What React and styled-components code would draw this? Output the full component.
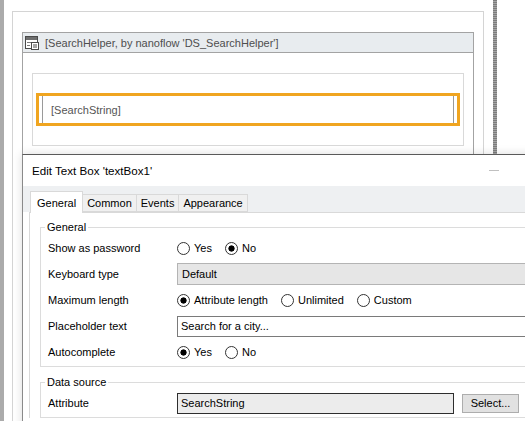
import styled, { createGlobalStyle } from "styled-components";

const GlobalStyle = createGlobalStyle`
  html, body {
    margin: 0;
    background: #ffffff;
  }
  body {
    font-family: "Liberation Sans", Arial, sans-serif;
    font-size: 11px;
    color: #000;
  }
`;

const Page = styled.div`
  position: relative;
  width: 525px;
  height: 421px;
  overflow: hidden;
  display: flex;
  background: #fff;
`;

const SideBar = styled.div`
  width: 4px;
  flex-shrink: 0;
  background: ${(p) => (p.$dark ? "#8e8e8e" : "#ababab")};
  background-image: ${(p) =>
    p.$dark
      ? "repeating-linear-gradient(0deg, #7c7c7c 0 1px, #a4a4a4 1px 2px)"
      : "none"};
`;

const Canvas = styled.div`
  width: 489px;
  flex-shrink: 0;
  padding: 11px 0 0 8px;
  box-sizing: border-box;
`;

const OuterBox = styled.div`
  width: 472px;
  height: 420px;
  box-sizing: border-box;
  border: 1px solid #d4d4d4;
  padding: 20px 9px;
`;

const DataView = styled.div`
  width: 452px;
  box-sizing: border-box;
`;

const DataHeader = styled.div`
  height: 21px;
  box-sizing: border-box;
  border: 1px solid #a3a3a3;
  background: #e8ecef;
  display: flex;
  align-items: center;
  gap: 6px;
  padding-left: 2px;
  color: #4e4e4e;
`;

const DataBody = styled.div`
  border-left: 1px solid #a3a3a3;
  border-right: 1px solid #a3a3a3;
  padding: 20px 9px;
  height: 200px;
`;

const InnerBox = styled.div`
  width: 432px;
  height: 73px;
  box-sizing: border-box;
  border: 1px solid #d9d9d9;
  padding: 19px 3px 0;
`;

const Selection = styled.div`
  height: 33px;
  box-sizing: border-box;
  border: 3px solid #f0a520;
  padding: 0 3px;
`;

const FakeInput = styled.div`
  height: 100%;
  box-sizing: border-box;
  border-left: 1px solid #9a9a9a;
  border-right: 1px solid #9a9a9a;
  padding-left: 8px;
  display: flex;
  align-items: center;
  color: #555;
`;

const Dialog = styled.div`
  position: absolute;
  left: 22px;
  top: 154px;
  width: 586px;
  height: 300px;
  background: #fff;
  border-top: 1px solid #5a5a5a;
  border-left: 1px solid #8a8a8a;
  box-shadow: 0 0 9px rgba(0, 0, 0, 0.14);
`;

const TitleBar = styled.div`
  height: 31px;
  display: flex;
  align-items: center;
`;

const Title = styled.div`
  flex: 1;
  padding-left: 9px;
  font-size: 11.6px;
`;

const WinButton = styled.div`
  width: 46px;
  height: 31px;
  display: flex;
  align-items: center;
  justify-content: center;
  &::before {
    content: "";
    width: 10px;
    height: 1px;
    background: ${(p) => (p.$muted ? "#c0c0c0" : "transparent")};
  }
`;

const TabStrip = styled.div`
  height: 26px;
  background: #eef0f2;
  display: flex;
  align-items: flex-end;
  padding-left: 7px;
`;

const Tab = styled.div`
  height: ${(p) => (p.$active ? "22px" : "18px")};
  box-sizing: border-box;
  padding: 0 ${(p) => (p.$active ? "6px" : "4px")};
  margin-bottom: ${(p) => (p.$active ? "-1px" : "0")};
  background: ${(p) => (p.$active ? "#fff" : "#f0f0f0")};
  border: 1px solid #d9d9d9;
  border-bottom: ${(p) => (p.$active ? "none" : "1px solid #d9d9d9")};
  margin-left: ${(p) => (p.$first ? "0" : "-1px")};
  display: flex;
  align-items: center;
  position: relative;
  z-index: ${(p) => (p.$active ? 1 : 0)};
`;

const Panel = styled.div`
  margin-left: 6px;
  border-top: 1px solid #d9d9d9;
  border-left: 1px solid #d9d9d9;
  padding: 6px 14px 0 10px;
`;

const Group = styled.fieldset`
  margin: ${(p) => (p.$spaced ? "7px" : "0")} 0 0;
  padding: 0 8px 1px 7px;
  border: 1px solid #dcdcdc;
  min-width: 0;
`;

const Legend = styled.legend`
  padding: 0 2px;
  margin-left: -3px;
  line-height: 16px;
`;

const Row = styled.div`
  height: 26px;
  display: grid;
  grid-template-columns: 129px 1fr;
  align-items: center;
`;

const Label = styled.div``;

const Radios = styled.div`
  display: flex;
  align-items: center;
  gap: 13px;
`;

const Radio = styled.div`
  display: flex;
  align-items: center;
  gap: 4px;
  &::before {
    content: "";
    width: 11px;
    height: 11px;
    border-radius: 50%;
    border: 1px solid #333;
    background: ${(p) =>
      p.$checked
        ? "radial-gradient(circle, #000 0 2.8px, #fff 3.4px)"
        : "#fff"};
  }
`;

const Field = styled.div`
  height: ${(p) => p.$h || 21}px;
  width: ${(p) => (p.$w ? `${p.$w}px` : "auto")};
  box-sizing: border-box;
  border: 1px solid ${(p) => p.$border || "#7a7a7a"};
  background: ${(p) => p.$bg || "#fff"};
  display: flex;
  align-items: center;
  padding-left: ${(p) => p.$pad || 3}px;
`;

const AttrLine = styled.div`
  display: flex;
  align-items: center;
  gap: 8px;
`;

const Button = styled.div`
  width: 57px;
  height: 19px;
  box-sizing: border-box;
  border: 1px solid #adadad;
  background: #e1e1e1;
  display: flex;
  align-items: center;
  justify-content: center;
`;

const FormIcon = () => (
  <svg width="14" height="14" viewBox="0 0 14 14">
    <rect x="0.5" y="0.5" width="12" height="12" fill="#fff" stroke="#4a4a4a" />
    <rect x="1" y="1" width="11" height="3" fill="#6e6e6e" />
    <line x1="2" y1="6.5" x2="6" y2="6.5" stroke="#7a7a7a" />
    <line x1="2" y1="9.5" x2="5" y2="9.5" stroke="#7a7a7a" />
    <rect x="6.5" y="6.5" width="7" height="7" fill="#fff" stroke="#4a4a4a" />
    <line x1="8" y1="9" x2="12" y2="9" stroke="#4a4a4a" />
    <line x1="8" y1="11" x2="12" y2="11" stroke="#4a4a4a" />
  </svg>
);

export default function App() {
  return (
    <>
      <GlobalStyle />
      <Page>
        <SideBar />
        <Canvas>
          <OuterBox>
            <DataView>
              <DataHeader>
                <FormIcon />
                <span>[SearchHelper, by nanoflow 'DS_SearchHelper']</span>
              </DataHeader>
              <DataBody>
                <InnerBox>
                  <Selection>
                    <FakeInput>[SearchString]</FakeInput>
                  </Selection>
                </InnerBox>
              </DataBody>
            </DataView>
          </OuterBox>
        </Canvas>
        <SideBar $dark />

        <Dialog>
          <TitleBar>
            <Title>Edit Text Box 'textBox1'</Title>
            <WinButton $muted />
            <WinButton />
            <WinButton />
          </TitleBar>
          <TabStrip>
            <Tab $active $first>General</Tab>
            <Tab>Common</Tab>
            <Tab>Events</Tab>
            <Tab>Appearance</Tab>
          </TabStrip>
          <Panel>
            <Group>
              <Legend>General</Legend>
              <Row>
                <Label>Show as password</Label>
                <Radios>
                  <Radio>Yes</Radio>
                  <Radio $checked>No</Radio>
                </Radios>
              </Row>
              <Row>
                <Label>Keyboard type</Label>
                <Field $h={22} $bg="#e6e6e6" $border="#b4b4b4" $pad={4}>
                  Default
                </Field>
              </Row>
              <Row>
                <Label>Maximum length</Label>
                <Radios>
                  <Radio $checked>Attribute length</Radio>
                  <Radio>Unlimited</Radio>
                  <Radio>Custom</Radio>
                </Radios>
              </Row>
              <Row>
                <Label>Placeholder text</Label>
                <Field>Search for a city...</Field>
              </Row>
              <Row>
                <Label>Autocomplete</Label>
                <Radios>
                  <Radio $checked>Yes</Radio>
                  <Radio>No</Radio>
                </Radios>
              </Row>
            </Group>
            <Group $spaced>
              <Legend>Data source</Legend>
              <Row>
                <Label>Attribute</Label>
                <AttrLine>
                  <Field $w={277} $bg="#ececec" $border="#2e2e2e">
                    SearchString
                  </Field>
                  <Button>Select...</Button>
                </AttrLine>
              </Row>
            </Group>
          </Panel>
        </Dialog>
      </Page>
    </>
  );
}
